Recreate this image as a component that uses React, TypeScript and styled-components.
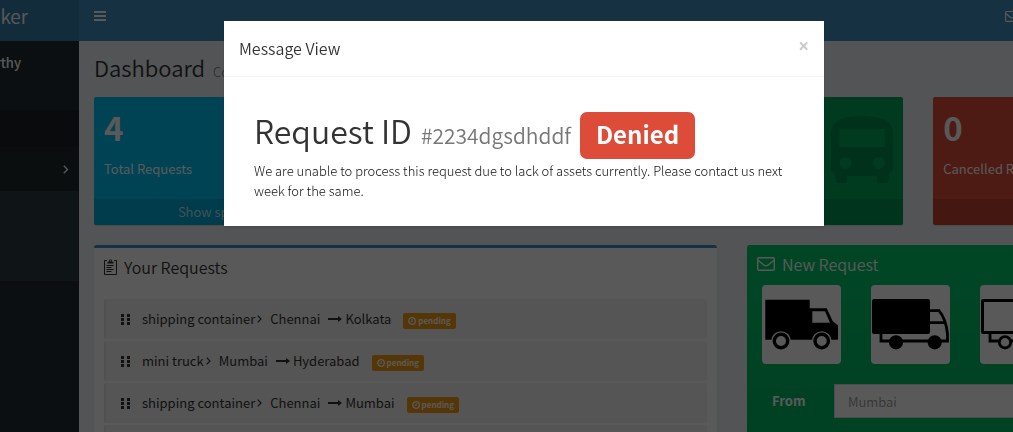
import React from 'react';
import styled, { createGlobalStyle } from 'styled-components';

const GlobalStyle = createGlobalStyle`
  * { box-sizing: border-box; }
  body {
    margin: 0;
    background: #222d32;
    color: #333;
    font: 350 13px/20px "Noto Sans CJK SC", "Noto Sans", sans-serif;
    overflow: hidden;
  }
  h1, h2, h3, p, ul { margin: 0; padding: 0; font-weight: inherit; }
  ul { list-style: none; }
  a { color: inherit; text-decoration: none; }
  svg { display: block; flex: none; }
`;

const Page = styled.div`
  display: flex;
  height: 100vh;
  overflow: hidden;
`;

const Sidebar = styled.aside`
  flex: 0 0 79px;
  overflow: hidden;
  background: #222d32;
  color: #fff;
`;

const Brand = styled.a`
  display: flex;
  align-items: center;
  justify-content: flex-end;
  height: 41px;
  padding: 0 51px 10px 0;
  background: #367fa9;
  color: #fff;
  font-size: 19px;
`;

const UserPanel = styled.div`
  display: flex;
  justify-content: flex-end;
  height: 69px;
  padding: 12px 58px 0 0;
  font-weight: 500;
`;

const MenuHeading = styled.div`
  height: 37px;
  background: #1a2226;
`;

const MenuItem = styled.a`
  display: flex;
  align-items: center;
  justify-content: flex-end;
  height: 44px;
  padding-right: 10px;
  background: #1e282c;
`;

const SubMenu = styled.div`
  height: 90px;
  margin-right: 1px;
  background: #2c3b41;
`;

const Main = styled.div`
  flex: 1;
  min-width: 0;
  overflow: hidden;
  background: #ecf0f5;
`;

const Canvas = styled.div`
  min-width: 1119px;
`;

const TopBar = styled.header`
  display: flex;
  justify-content: space-between;
  height: 41px;
  padding: 11px 179px 0 15px;
  background: #3c8dbc;
  color: #fff;
`;

const IconButton = styled.button`
  display: flex;
  height: 12px;
  padding: 0;
  border: 0;
  background: none;
  color: inherit;
`;

const Content = styled.main`
  display: flex;
  flex-direction: column;
  gap: 20px;
  padding: 16px 15px 0;
`;

const PageTitle = styled.h1`
  display: flex;
  align-items: baseline;
  gap: 8px;
  height: 20px;
  line-height: 20px;
  font-size: 22px;
`;

const PageSubtitle = styled.small`
  color: #777;
  font-size: 13px;
  font-weight: 300;
`;

const Stats = styled.section`
  display: grid;
  grid-template-columns: repeat(4, 1fr);
  gap: 30px;
`;

const StatCard = styled.article<{ $color: string }>`
  display: flex;
  flex-direction: column;
  height: 128px;
  overflow: hidden;
  border-radius: 2px;
  background: ${(p) => p.$color};
  color: #fff;
  box-shadow: 0 1px 1px rgba(0, 0, 0, 0.1);
`;

const StatBody = styled.div`
  display: flex;
  justify-content: space-between;
  flex: 1;
  padding: 10px;
  font-weight: 400;
`;

const StatValue = styled.h3`
  margin-bottom: 12px;
  font-size: 33px;
  font-weight: 700;
  line-height: 40px;
`;

const StatIcon = styled.div`
  padding-top: 9px;
  color: rgba(0, 0, 0, 0.15);
`;

const StatFooter = styled.a`
  height: 26px;
  background: rgba(0, 0, 0, 0.1);
  color: rgba(255, 255, 255, 0.8);
  line-height: 26px;
  text-align: center;
`;

const Panels = styled.section`
  display: grid;
  grid-template-columns: 623fr 436fr;
  gap: 30px;
`;

const RequestsPanel = styled.section`
  border-top: 3px solid #3c8dbc;
  border-radius: 3px;
  background: #fff;
  box-shadow: 0 1px 1px rgba(0, 0, 0, 0.1);
`;

const PanelHeader = styled.header`
  display: flex;
  align-items: center;
  gap: 7px;
  height: 40px;
  padding: 0 10px 3px;
`;

const PanelTitle = styled.h2`
  font-size: 16px;
`;

const RequestList = styled.ul`
  display: flex;
  flex-direction: column;
  gap: 2px;
  padding: 11px 10px 10px;
`;

const RequestRow = styled.li`
  display: flex;
  align-items: center;
  height: 40px;
  padding-left: 15px;
  border-left: 2px solid #e6e7e8;
  border-radius: 2px;
  background: #f4f4f4;
  color: #333;
  font-weight: 400;
`;

const Vehicle = styled.span`
  margin: 0 2px 0 11px;
`;

const Origin = styled.span`
  margin: 0 8px;
`;

const Destination = styled.span`
  margin: 0 12px 0 3px;
`;

const Status = styled.span`
  display: flex;
  align-items: center;
  gap: 2px;
  height: 16px;
  margin-top: 3px;
  padding: 0 5px;
  border-radius: 2px;
  background: #f39c12;
  color: #fff;
  font-size: 8px;
  font-weight: 700;
  line-height: 16px;
`;

const NewRequestPanel = styled.section`
  min-height: 360px;
  border-radius: 3px;
  background: linear-gradient(to top, #00a65a, #00ca6d);
  color: #fff;
`;

const VehicleGrid = styled.div`
  display: grid;
  grid-template-columns: repeat(4, 1fr);
  gap: 30px;
  padding: 0 15px;
`;

const VehicleTile = styled.button`
  display: flex;
  height: 79px;
  padding: 0;
  border: 0;
  border-radius: 4px;
  background: #fff;
  color: #000;
`;

const Field = styled.div`
  display: flex;
  align-items: center;
  padding: 20px 15px;
`;

const FieldLabel = styled.label`
  flex: 0 0 72px;
  padding-left: 10px;
  font-weight: 700;
`;

const TextInput = styled.input`
  flex: 1;
  min-width: 0;
  height: 34px;
  padding: 6px 13px;
  border: 1px solid #d2d6de;
  border-radius: 0;
  background: #fff;
  font: inherit;
  &::placeholder { color: #999; opacity: 1; }
`;

const Overlay = styled.div`
  position: fixed;
  inset: 0;
  display: flex;
  align-items: flex-start;
  justify-content: center;
  padding: 21px 0 0 35px;
  background: rgba(0, 0, 0, 0.65);
`;

const Dialog = styled.section`
  width: 600px;
  background: #fff;
  box-shadow: 0 2px 3px rgba(0, 0, 0, 0.125);
`;

const DialogHeader = styled.header`
  display: flex;
  justify-content: space-between;
  height: 56px;
  padding: 15px;
  border-bottom: 1px solid #f4f4f4;
`;

const DialogTitle = styled.h2`
  font-size: 16px;
  line-height: 25px;
`;

const CloseButton = styled.button`
  height: 20px;
  padding: 0;
  border: 0;
  background: none;
  color: #ccc;
  font: 700 19px/20px "Open Sans", sans-serif;
`;

const DialogBody = styled.div`
  padding: 33px 30px 25px;
`;

const RequestHeading = styled.h1`
  display: flex;
  align-items: baseline;
  gap: 9px;
  height: 51px;
  font-size: 32px;
  line-height: 40px;
`;

const RequestId = styled.small`
  color: #777;
  font-size: 21px;
`;

const Verdict = styled.span`
  padding: 0 16px 4px;
  border-radius: 7px;
  background: #dd4b39;
  color: #fff;
  font-size: 24px;
  font-weight: 700;
  line-height: 43px;
`;

const Message = styled.p`
  color: #111;
  font-weight: 300;
`;

const MenuIcon = () => (
  <svg width="12" height="12" viewBox="0 0 12 12" fill="currentColor">
    <path d="M0 0h12v2H0zM0 4h12v2H0zM0 8h12v2H0z" />
  </svg>
);

const EnvelopeIcon = ({ width }: { width: number }) => (
  <svg width={width} height={(width * 14) / 18} viewBox="0 0 18 14" fill="none" stroke="currentColor" strokeWidth="1.4">
    <rect x=".7" y=".7" width="16.6" height="12.6" rx="1.2" />
    <path d="M1 3.2 6.8 8Q9 9.8 11.2 8L17 3.2" />
  </svg>
);

const AngleIcon = ({ size = 9 }: { size?: number }) => (
  <svg width={(size * 5) / 8} height={size} viewBox="0 0 5 8" fill="none" stroke="currentColor" strokeWidth="1.2">
    <path d="M.7.7 4 4 .7 7.3" />
  </svg>
);

const BusIcon = () => (
  <svg width="62" height="67" viewBox="0 0 62 67" fill="currentColor" fillRule="evenodd">
    <path d="M0 17C1 9 4 5 10 3 22-1 40-1 52 3 58 5 61 9 62 17V53Q62 55 60 56L57.5 58V64Q57 67 54 67H49Q46 67 46 64V59.7H16V64Q16 67 13 67H8Q5 67 4.5 64V58L2 56Q0 55 0 53ZM8.3 13V31H54V13ZM14.3 41A6 6 0 1 0 14.3 53 6 6 0 1 0 14.3 41ZM48 41A6 6 0 1 0 48 53 6 6 0 1 0 48 41Z" />
  </svg>
);

const ClipboardIcon = () => (
  <svg width="13" height="16" viewBox="0 0 13 16" fill="none" stroke="#333" strokeWidth="1">
    <path d="M3 1.5H.5v14h12v-14H10M2.5 6.5h7M2.5 8.5h5M2.5 10.5h7M2.5 12.5h5" />
    <path d="M3.5 4.5V3L5 2.5 5.5.5h2L8 2.5 9.5 3v1.5z" fill="#333" stroke="none" />
    <path d="M6 1.5h1v1H6z" fill="#fff" stroke="none" />
  </svg>
);

const GripIcon = () => (
  <svg width="10" height="11" viewBox="0 0 10 11" fill="currentColor">
    <path d="M0 0h3v3H0zM0 4h3v3H0zM0 8h3v3H0zM6 0h3v3H6zM6 4h3v3H6zM6 8h3v3H6z" />
  </svg>
);

const ArrowIcon = () => (
  <svg width="14" height="6" viewBox="0 0 14 6" fill="currentColor">
    <path d="M0 2h10V0l4 3-4 3V4H0z" />
  </svg>
);

const ClockIcon = () => (
  <svg width="8" height="8" viewBox="0 0 8 8" fill="none" stroke="currentColor">
    <circle cx="4" cy="4" r="3.3" strokeWidth="1.3" />
    <path d="M4.3 2v2.4H2.5" strokeWidth=".9" />
  </svg>
);

const DeliveryTruck = () => (
  <svg width="79" height="79" viewBox="0 0 79 79">
    <path fillRule="evenodd" d="M3.3 14.7H47.7V23.3H64.7L70.7 36 76 40.5V54.7H3.3ZM50.3 26.3V37.7H68L63 26.3Z" />
    <g fill="#fff">
      <circle cx="19" cy="56" r="9.8" />
      <circle cx="59.7" cy="56" r="9.8" />
    </g>
    <g fill="#fff" stroke="#000" strokeWidth="3.4">
      <circle cx="19" cy="56" r="6.7" />
      <circle cx="59.7" cy="56" r="6.7" />
    </g>
  </svg>
);

const BoxTruck = ({ outlined = false }: { outlined?: boolean }) => (
  <svg width="79" height="79" viewBox="0 0 79 79" fill="none" stroke="#000" strokeWidth="2.8">
    <rect x="2.5" y="15.5" width="55" height="32" rx=".5" fill={outlined ? '#fff' : '#000'} strokeWidth="3" />
    <path d="M58 25.7H68Q75 34 76.5 49V56H10V49M58 37.7H74" />
    <g fill={outlined ? '#fff' : '#000'}>
      <circle cx="25" cy="57.3" r="5.7" />
      <circle cx="63.7" cy="57.3" r="5.7" />
    </g>
  </svg>
);

const requests = [
  { vehicle: 'shipping container', from: 'Chennai', to: 'Kolkata' },
  { vehicle: 'mini truck', from: 'Mumbai', to: 'Hyderabad' },
  { vehicle: 'shipping container', from: 'Chennai', to: 'Mumbai' },
  { vehicle: '', from: '', to: '' },
];

export default function App() {
  return (
    <>
      <GlobalStyle />
      <Page>
        <Sidebar>
          <Brand href="#">ker</Brand>
          <UserPanel>rthy</UserPanel>
          <MenuHeading />
          <MenuItem href="#" aria-label="Expand menu"><AngleIcon size={9} /></MenuItem>
          <SubMenu />
        </Sidebar>
        <Main>
          <Canvas>
            <TopBar>
              <IconButton aria-label="Toggle navigation"><MenuIcon /></IconButton>
              <IconButton aria-label="Messages"><EnvelopeIcon width={14} /></IconButton>
            </TopBar>
            <Content>
              <PageTitle>Dashboard <PageSubtitle>Control panel</PageSubtitle></PageTitle>
              <Stats>
                <StatCard $color="#00c0ef">
                  <StatBody>
                    <div><StatValue>4</StatValue><p>Total Requests</p></div>
                  </StatBody>
                  <StatFooter href="#">Show specific</StatFooter>
                </StatCard>
                <StatCard $color="#f39c12" />
                <StatCard $color="#00a65a">
                  <StatBody><div /><StatIcon><BusIcon /></StatIcon></StatBody>
                  <StatFooter href="#" />
                </StatCard>
                <StatCard $color="#dd4b39">
                  <StatBody>
                    <div><StatValue>0</StatValue><p>Cancelled Requests</p></div>
                  </StatBody>
                  <StatFooter href="#" />
                </StatCard>
              </Stats>
              <Panels>
                <RequestsPanel>
                  <PanelHeader><ClipboardIcon /><PanelTitle>Your Requests</PanelTitle></PanelHeader>
                  <RequestList>
                    {requests.map((r, i) => (
                      <RequestRow key={i}>
                        {r.vehicle && (
                          <>
                            <GripIcon />
                            <Vehicle>{r.vehicle}</Vehicle>
                            <AngleIcon size={8} />
                            <Origin>{r.from}</Origin>
                            <ArrowIcon />
                            <Destination>{r.to}</Destination>
                            <Status><ClockIcon />pending</Status>
                          </>
                        )}
                      </RequestRow>
                    ))}
                  </RequestList>
                </RequestsPanel>
                <NewRequestPanel>
                  <PanelHeader><EnvelopeIcon width={18} /><PanelTitle>New Request</PanelTitle></PanelHeader>
                  <VehicleGrid>
                    <VehicleTile aria-label="Delivery truck"><DeliveryTruck /></VehicleTile>
                    <VehicleTile aria-label="Box truck"><BoxTruck /></VehicleTile>
                    <VehicleTile aria-label="Container truck"><BoxTruck outlined /></VehicleTile>
                    <VehicleTile aria-label="Truck"><BoxTruck /></VehicleTile>
                  </VehicleGrid>
                  <Field>
                    <FieldLabel htmlFor="from">From</FieldLabel>
                    <TextInput id="from" placeholder="Mumbai" />
                  </Field>
                </NewRequestPanel>
              </Panels>
            </Content>
          </Canvas>
        </Main>
      </Page>
      <Overlay>
        <Dialog role="dialog" aria-labelledby="dialog-title">
          <DialogHeader>
            <DialogTitle id="dialog-title">Message View</DialogTitle>
            <CloseButton aria-label="Close">×</CloseButton>
          </DialogHeader>
          <DialogBody>
            <RequestHeading>
              Request ID <RequestId>#2234dgsdhddf</RequestId> <Verdict>Denied</Verdict>
            </RequestHeading>
            <Message>
              We are unable to process this request due to lack of assets currently. Please contact us next week for
              the same.
            </Message>
          </DialogBody>
        </Dialog>
      </Overlay>
    </>
  );
}
